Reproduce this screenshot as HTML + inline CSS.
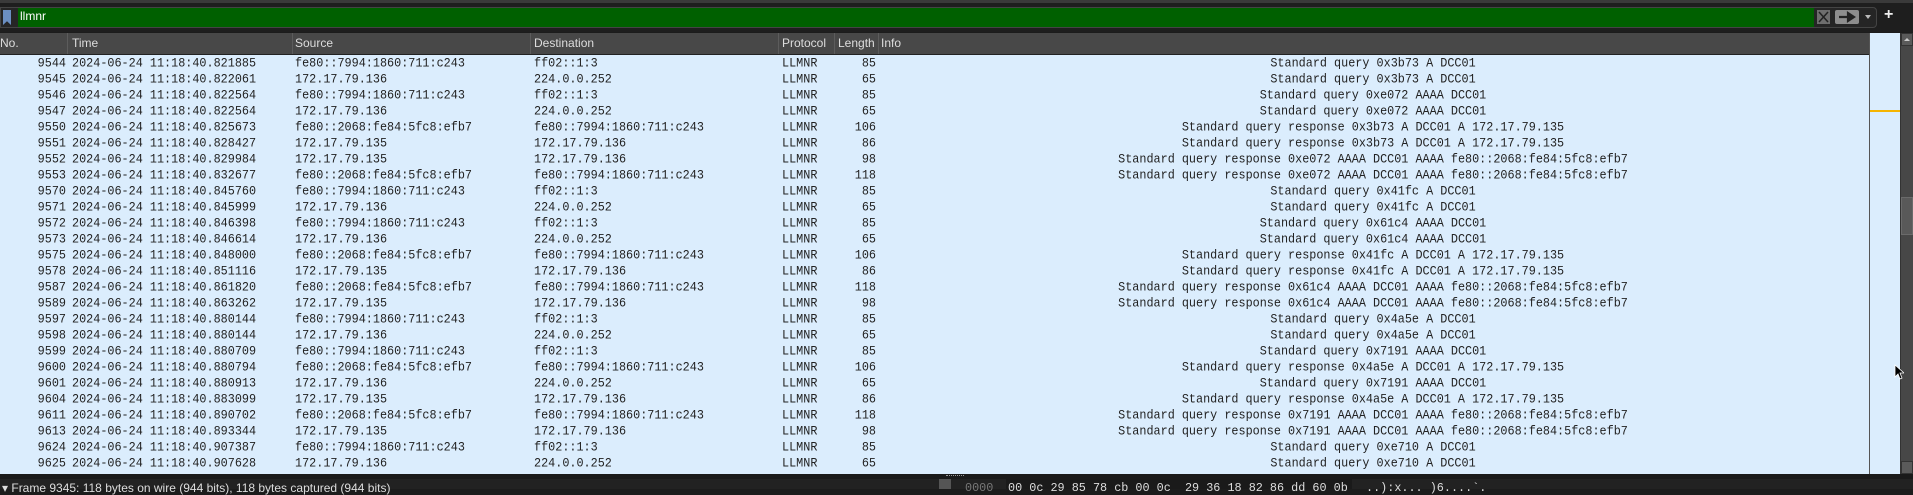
<!DOCTYPE html>
<html><head><meta charset="utf-8"><style>
*{margin:0;padding:0;box-sizing:border-box}
body{width:1913px;height:489px;overflow:hidden;background:#1c1c1c;position:relative;font-family:"Liberation Sans",sans-serif}
.a{position:absolute}
#top{left:0;top:0;width:1913px;height:32px;background:#1e1e1e;border-top:3px solid #3a3a3a}
#flt{left:0;top:7px;width:1877px;height:21px;background:#252525;border:1px solid #444;border-radius:0 4px 4px 0}
#grn{left:18px;top:8px;width:1796px;height:19px;background:#006000}
#hdr{left:0;top:33px;width:1869px;height:22px;background:#484848;border-bottom:1px solid #222;color:#ddd;font-size:12px}
#hdr span{position:absolute;top:3px}
#hdr i{position:absolute;top:0;width:1px;height:21px;background:#5c5c5c}
#list{left:0;top:55px;width:1869px;height:419px;background:#dbedfd}
.r{position:absolute;left:0;width:1869px;height:16px;font-family:"Liberation Mono",monospace;font-size:11.8px;color:#222;line-height:16px;white-space:pre}
.r span{position:absolute;top:0;transform:scaleY(1.12);transform-origin:center}
.n{right:1803px;text-align:right}
.t{left:72px}.s{left:295px}.d{left:534px}.p{left:782px}
.l{right:993px;text-align:right}
.i{left:878px;width:990px;text-align:center}
#mm{left:1869px;top:33px;width:31px;height:441px;background:#dbedfd;border-left:1px solid #555}
#sb{left:1900px;top:33px;width:13px;height:441px;background:#474747;border-left:1px solid #333}
#bot{left:0;top:474px;width:1913px;height:15px;background:#1a1a1a}
#bp{left:0;top:479px;width:1913px;height:10px;background:#222}
.bt{font-family:"Liberation Mono",monospace;font-size:11.8px;color:#ddd;top:481px;white-space:pre}
</style></head><body>
<div id="top" class="a"></div>
<div id="flt" class="a"></div>
<div class="a" style="left:3px;top:10px;width:8px;height:15px;background:#6b8fc2;clip-path:polygon(0 0,100% 0,100% 100%,50% 75%,0 100%)"></div>
<div id="grn" class="a"></div>
<div class="a" style="left:20px;top:9px;color:#fff;font-size:12px">llmnr</div>
<div class="a" style="left:1817px;top:10px;width:13px;height:14px;background:#6e6e6e"><svg width="13" height="14"><path d="M2 2L11 12M11 2L2 12" stroke="#222" stroke-width="1.5"/></svg></div>
<div class="a" style="left:1835px;top:10px;width:24px;height:14px;background:#8d8d8d;border-radius:2px"><svg width="24" height="14"><path d="M4 7H15M13 3L19 7L13 11Z" stroke="#222" stroke-width="2.2" fill="#222"/></svg></div>
<div class="a" style="left:1865px;top:15px;width:0;height:0;border-left:3px solid transparent;border-right:3px solid transparent;border-top:4px solid #bbb"></div>
<div class="a" style="left:1884px;top:6px;color:#eee;font-size:16px;font-weight:bold">+</div>
<div id="hdr" class="a">
<span style="left:0">No.</span><i style="left:67px"></i>
<span style="left:72px">Time</span><i style="left:292px"></i>
<span style="left:295px">Source</span><i style="left:530px"></i>
<span style="left:534px">Destination</span><i style="left:778px"></i>
<span style="left:782px">Protocol</span><i style="left:834px"></i>
<span style="left:838px">Length</span><i style="left:878px"></i>
<span style="left:881px">Info</span>
</div>
<div id="list" class="a"></div>
<div id="rows" class="a" style="left:0;top:55px;width:1869px;height:419px">
<div class="r" style="top:0"><span class="n">9544</span><span class="t">2024-06-24 11:18:40.821885</span><span class="s">fe80::7994:1860:711:c243</span><span class="d">ff02::1:3</span><span class="p">LLMNR</span><span class="l">85</span><span class="i">Standard query 0x3b73 A DCC01</span></div>
<div class="r" style="top:16px"><span class="n">9545</span><span class="t">2024-06-24 11:18:40.822061</span><span class="s">172.17.79.136</span><span class="d">224.0.0.252</span><span class="p">LLMNR</span><span class="l">65</span><span class="i">Standard query 0x3b73 A DCC01</span></div>
<div class="r" style="top:32px"><span class="n">9546</span><span class="t">2024-06-24 11:18:40.822564</span><span class="s">fe80::7994:1860:711:c243</span><span class="d">ff02::1:3</span><span class="p">LLMNR</span><span class="l">85</span><span class="i">Standard query 0xe072 AAAA DCC01</span></div>
<div class="r" style="top:48px"><span class="n">9547</span><span class="t">2024-06-24 11:18:40.822564</span><span class="s">172.17.79.136</span><span class="d">224.0.0.252</span><span class="p">LLMNR</span><span class="l">65</span><span class="i">Standard query 0xe072 AAAA DCC01</span></div>
<div class="r" style="top:64px"><span class="n">9550</span><span class="t">2024-06-24 11:18:40.825673</span><span class="s">fe80::2068:fe84:5fc8:efb7</span><span class="d">fe80::7994:1860:711:c243</span><span class="p">LLMNR</span><span class="l">106</span><span class="i">Standard query response 0x3b73 A DCC01 A 172.17.79.135</span></div>
<div class="r" style="top:80px"><span class="n">9551</span><span class="t">2024-06-24 11:18:40.828427</span><span class="s">172.17.79.135</span><span class="d">172.17.79.136</span><span class="p">LLMNR</span><span class="l">86</span><span class="i">Standard query response 0x3b73 A DCC01 A 172.17.79.135</span></div>
<div class="r" style="top:96px"><span class="n">9552</span><span class="t">2024-06-24 11:18:40.829984</span><span class="s">172.17.79.135</span><span class="d">172.17.79.136</span><span class="p">LLMNR</span><span class="l">98</span><span class="i">Standard query response 0xe072 AAAA DCC01 AAAA fe80::2068:fe84:5fc8:efb7</span></div>
<div class="r" style="top:112px"><span class="n">9553</span><span class="t">2024-06-24 11:18:40.832677</span><span class="s">fe80::2068:fe84:5fc8:efb7</span><span class="d">fe80::7994:1860:711:c243</span><span class="p">LLMNR</span><span class="l">118</span><span class="i">Standard query response 0xe072 AAAA DCC01 AAAA fe80::2068:fe84:5fc8:efb7</span></div>
<div class="r" style="top:128px"><span class="n">9570</span><span class="t">2024-06-24 11:18:40.845760</span><span class="s">fe80::7994:1860:711:c243</span><span class="d">ff02::1:3</span><span class="p">LLMNR</span><span class="l">85</span><span class="i">Standard query 0x41fc A DCC01</span></div>
<div class="r" style="top:144px"><span class="n">9571</span><span class="t">2024-06-24 11:18:40.845999</span><span class="s">172.17.79.136</span><span class="d">224.0.0.252</span><span class="p">LLMNR</span><span class="l">65</span><span class="i">Standard query 0x41fc A DCC01</span></div>
<div class="r" style="top:160px"><span class="n">9572</span><span class="t">2024-06-24 11:18:40.846398</span><span class="s">fe80::7994:1860:711:c243</span><span class="d">ff02::1:3</span><span class="p">LLMNR</span><span class="l">85</span><span class="i">Standard query 0x61c4 AAAA DCC01</span></div>
<div class="r" style="top:176px"><span class="n">9573</span><span class="t">2024-06-24 11:18:40.846614</span><span class="s">172.17.79.136</span><span class="d">224.0.0.252</span><span class="p">LLMNR</span><span class="l">65</span><span class="i">Standard query 0x61c4 AAAA DCC01</span></div>
<div class="r" style="top:192px"><span class="n">9575</span><span class="t">2024-06-24 11:18:40.848000</span><span class="s">fe80::2068:fe84:5fc8:efb7</span><span class="d">fe80::7994:1860:711:c243</span><span class="p">LLMNR</span><span class="l">106</span><span class="i">Standard query response 0x41fc A DCC01 A 172.17.79.135</span></div>
<div class="r" style="top:208px"><span class="n">9578</span><span class="t">2024-06-24 11:18:40.851116</span><span class="s">172.17.79.135</span><span class="d">172.17.79.136</span><span class="p">LLMNR</span><span class="l">86</span><span class="i">Standard query response 0x41fc A DCC01 A 172.17.79.135</span></div>
<div class="r" style="top:224px"><span class="n">9587</span><span class="t">2024-06-24 11:18:40.861820</span><span class="s">fe80::2068:fe84:5fc8:efb7</span><span class="d">fe80::7994:1860:711:c243</span><span class="p">LLMNR</span><span class="l">118</span><span class="i">Standard query response 0x61c4 AAAA DCC01 AAAA fe80::2068:fe84:5fc8:efb7</span></div>
<div class="r" style="top:240px"><span class="n">9589</span><span class="t">2024-06-24 11:18:40.863262</span><span class="s">172.17.79.135</span><span class="d">172.17.79.136</span><span class="p">LLMNR</span><span class="l">98</span><span class="i">Standard query response 0x61c4 AAAA DCC01 AAAA fe80::2068:fe84:5fc8:efb7</span></div>
<div class="r" style="top:256px"><span class="n">9597</span><span class="t">2024-06-24 11:18:40.880144</span><span class="s">fe80::7994:1860:711:c243</span><span class="d">ff02::1:3</span><span class="p">LLMNR</span><span class="l">85</span><span class="i">Standard query 0x4a5e A DCC01</span></div>
<div class="r" style="top:272px"><span class="n">9598</span><span class="t">2024-06-24 11:18:40.880144</span><span class="s">172.17.79.136</span><span class="d">224.0.0.252</span><span class="p">LLMNR</span><span class="l">65</span><span class="i">Standard query 0x4a5e A DCC01</span></div>
<div class="r" style="top:288px"><span class="n">9599</span><span class="t">2024-06-24 11:18:40.880709</span><span class="s">fe80::7994:1860:711:c243</span><span class="d">ff02::1:3</span><span class="p">LLMNR</span><span class="l">85</span><span class="i">Standard query 0x7191 AAAA DCC01</span></div>
<div class="r" style="top:304px"><span class="n">9600</span><span class="t">2024-06-24 11:18:40.880794</span><span class="s">fe80::2068:fe84:5fc8:efb7</span><span class="d">fe80::7994:1860:711:c243</span><span class="p">LLMNR</span><span class="l">106</span><span class="i">Standard query response 0x4a5e A DCC01 A 172.17.79.135</span></div>
<div class="r" style="top:320px"><span class="n">9601</span><span class="t">2024-06-24 11:18:40.880913</span><span class="s">172.17.79.136</span><span class="d">224.0.0.252</span><span class="p">LLMNR</span><span class="l">65</span><span class="i">Standard query 0x7191 AAAA DCC01</span></div>
<div class="r" style="top:336px"><span class="n">9604</span><span class="t">2024-06-24 11:18:40.883099</span><span class="s">172.17.79.135</span><span class="d">172.17.79.136</span><span class="p">LLMNR</span><span class="l">86</span><span class="i">Standard query response 0x4a5e A DCC01 A 172.17.79.135</span></div>
<div class="r" style="top:352px"><span class="n">9611</span><span class="t">2024-06-24 11:18:40.890702</span><span class="s">fe80::2068:fe84:5fc8:efb7</span><span class="d">fe80::7994:1860:711:c243</span><span class="p">LLMNR</span><span class="l">118</span><span class="i">Standard query response 0x7191 AAAA DCC01 AAAA fe80::2068:fe84:5fc8:efb7</span></div>
<div class="r" style="top:368px"><span class="n">9613</span><span class="t">2024-06-24 11:18:40.893344</span><span class="s">172.17.79.135</span><span class="d">172.17.79.136</span><span class="p">LLMNR</span><span class="l">98</span><span class="i">Standard query response 0x7191 AAAA DCC01 AAAA fe80::2068:fe84:5fc8:efb7</span></div>
<div class="r" style="top:384px"><span class="n">9624</span><span class="t">2024-06-24 11:18:40.907387</span><span class="s">fe80::7994:1860:711:c243</span><span class="d">ff02::1:3</span><span class="p">LLMNR</span><span class="l">85</span><span class="i">Standard query 0xe710 A DCC01</span></div>
<div class="r" style="top:400px"><span class="n">9625</span><span class="t">2024-06-24 11:18:40.907628</span><span class="s">172.17.79.136</span><span class="d">224.0.0.252</span><span class="p">LLMNR</span><span class="l">65</span><span class="i">Standard query 0xe710 A DCC01</span></div>
</div>
<div id="mm" class="a"></div>
<div class="a" style="left:1870px;top:110px;width:30px;height:2px;background:#f5b400"></div>
<div id="sb" class="a"></div>
<div class="a" style="left:1901px;top:33px;width:12px;height:13px;background:#5a5a5a;border:1px solid #333"></div>
<div class="a" style="left:1904px;top:38px;width:0;height:0;border-left:3px solid transparent;border-right:3px solid transparent;border-bottom:3px solid #ccc"></div>
<div class="a" style="left:1901px;top:197px;width:12px;height:38px;background:#595959;border:1px solid #6a6a6a"></div>
<div class="a" style="left:1901px;top:461px;width:12px;height:13px;background:#5a5a5a;border:1px solid #333"></div>
<div class="a" style="left:1894px;top:364px"><svg width="10" height="16"><path d="M1 1L1 13L4 10L6 15L8 14L6 9L10 9Z" fill="#000" stroke="#fff" stroke-width="0.8"/></svg></div>
<div id="bot" class="a"></div>
<div id="bp" class="a"></div>
<div class="a" style="left:946px;top:475px;width:18px;height:2px;border-top:1px dotted #999"></div>
<div class="a" style="left:939px;top:479px;width:12px;height:10px;background:#555"></div>
<div class="a" style="left:1006px;top:479px;width:346px;height:10px;background:#1a1a1a"></div>
<div class="a bt" style="left:2px;font-family:'Liberation Sans',sans-serif;font-size:12px">▾ Frame 9345: 118 bytes on wire (944 bits), 118 bytes captured (944 bits)</div>
<div class="a bt" style="left:965px;color:#777">0000</div>
<div class="a bt" style="left:1008px">00 0c 29 85 78 cb 00 0c  29 36 18 82 86 dd 60 0b</div>
<div class="a bt" style="left:1366px">..):x... )6....`.</div>
</body></html>
